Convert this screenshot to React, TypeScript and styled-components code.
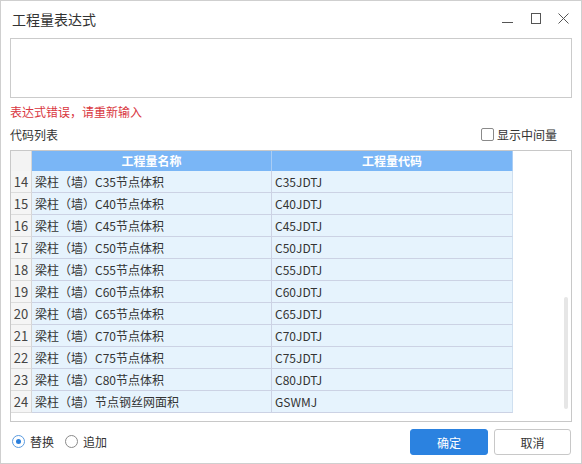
import React from 'react';
import styled, { createGlobalStyle } from 'styled-components';

const GlobalStyle = createGlobalStyle`
  html, body {
    margin: 0;
    padding: 0;
    background: #ffffff;
  }
  body {
    font-family: 'Noto Sans CJK SC', 'Noto Sans', 'Liberation Sans', sans-serif;
    color: #333333;
  }
`;

const rows = [
  { no: 14, name: '梁柱（墙）C35节点体积', code: 'C35JDTJ' },
  { no: 15, name: '梁柱（墙）C40节点体积', code: 'C40JDTJ' },
  { no: 16, name: '梁柱（墙）C45节点体积', code: 'C45JDTJ' },
  { no: 17, name: '梁柱（墙）C50节点体积', code: 'C50JDTJ' },
  { no: 18, name: '梁柱（墙）C55节点体积', code: 'C55JDTJ' },
  { no: 19, name: '梁柱（墙）C60节点体积', code: 'C60JDTJ' },
  { no: 20, name: '梁柱（墙）C65节点体积', code: 'C65JDTJ' },
  { no: 21, name: '梁柱（墙）C70节点体积', code: 'C70JDTJ' },
  { no: 22, name: '梁柱（墙）C75节点体积', code: 'C75JDTJ' },
  { no: 23, name: '梁柱（墙）C80节点体积', code: 'C80JDTJ' },
  { no: 24, name: '梁柱（墙）节点钢丝网面积', code: 'GSWMJ' },
];

const Window = styled.div`
  position: relative;
  box-sizing: border-box;
  width: 582px;
  height: 464px;
  border: 1px solid #cfcfcf;
  background: #ffffff;
  display: flex;
  flex-direction: column;
`;

const TitleBar = styled.div`
  height: 37px;
  display: flex;
  align-items: center;
  justify-content: space-between;
  padding: 0 12px 0 11px;
`;

const Title = styled.div`
  font-size: 14px;
  color: #333;
  margin-top: -1px;
`;

const Controls = styled.div`
  display: flex;
  align-items: center;
  gap: 17px;
`;

const CtrlBtn = styled.div`
  width: 11px;
  height: 11px;
  display: flex;
  align-items: center;
  justify-content: center;
  margin-top: -2px;
`;

const Body = styled.div`
  flex: 1;
  display: flex;
  flex-direction: column;
  padding: 0 9px;
`;

const ExprBox = styled.div`
  height: 58px;
  border: 1px solid #cbcbcb;
`;

const ErrorText = styled.div`
  height: 27px;
  line-height: 27px;
  font-size: 12px;
  color: #d9363e;
`;

const ListHead = styled.div`
  height: 25px;
  display: flex;
  align-items: center;
  justify-content: space-between;
  font-size: 12px;
  padding-bottom: 6px;
  box-sizing: border-box;
`;

const CheckLabel = styled.label`
  display: flex;
  align-items: center;
  gap: 3px;
  font-size: 12px;
  color: #333;
  margin-right: 15px;
`;

const CheckBox = styled.span`
  width: 11px;
  height: 11px;
  border: 1px solid #8a8a8a;
  border-radius: 2px;
  background: #fff;
`;

const TableBox = styled.div`
  position: relative;
  height: 272px;
  border: 1px solid #c8c8c8;
  box-sizing: border-box;
  overflow: hidden;
`;

const Grid = styled.div`
  display: grid;
  grid-template-columns: 21px 240px 241px;
  width: 502px;
`;

const NoHead = styled.div`
  height: 20px;
  background: #f3f3f3;
  border-right: 1px solid #d6d6d6;
`;

const HeadCell = styled.div`
  height: 20px;
  line-height: 20px;
  background: #7ab6f6;
  color: #ffffff;
  font-size: 12px;
  font-weight: bold;
  text-align: center;
  border-right: 1px solid #a9cdf5;
`;

const NoCell = styled.div`
  height: 22px;
  line-height: 21px;
  box-sizing: border-box;
  background: #f5f5f5;
  border-right: 1px solid #d6d6d6;
  border-bottom: 1px solid #dcdcdc;
  font-size: 13px;
  color: #444;
  text-align: center;
`;

const DataCell = styled.div<{ $last?: boolean }>`
  height: 22px;
  line-height: 21px;
  box-sizing: border-box;
  background: #e6f3fd;
  border-bottom: 1px solid #ccd2e4;
  border-right: 1px solid ${(p) => (p.$last ? '#cfe0f0' : '#ccd2e4')};
  font-size: 12px;
  color: #333;
  padding-left: 3px;
  white-space: nowrap;
`;

const Thumb = styled.div`
  position: absolute;
  right: 3px;
  top: 146px;
  width: 4px;
  height: 112px;
  border-radius: 2px;
  background: #e6e6e6;
`;

const Footer = styled.div`
  height: 41px;
  display: flex;
  align-items: center;
  justify-content: space-between;
  padding: 0 1px 0 2px;
`;

const RadioGroup = styled.div`
  display: flex;
  align-items: center;
  gap: 11px;
  margin-top: -2px;
`;

const RadioLabel = styled.label`
  display: flex;
  align-items: center;
  gap: 5px;
  font-size: 12px;
  color: #333;
`;

const RadioDot = styled.span<{ $on?: boolean }>`
  width: 11px;
  height: 11px;
  border-radius: 50%;
  border: 1px solid ${(p) => (p.$on ? '#5a9be0' : '#8a8a8a')};
  background: #fff;
  display: flex;
  align-items: center;
  justify-content: center;
  &::after {
    content: '';
    display: ${(p) => (p.$on ? 'block' : 'none')};
    width: 5px;
    height: 5px;
    border-radius: 50%;
    background: #2a7fdc;
  }
`;

const Buttons = styled.div`
  display: flex;
  gap: 6px;
  margin-top: -1px;
`;

const Button = styled.button<{ $primary?: boolean }>`
  width: ${(p) => (p.$primary ? '78px' : '77px')};
  height: 26px;
  border-radius: 3px;
  font-family: inherit;
  font-size: 12px;
  padding: 0;
  border: 1px solid ${(p) => (p.$primary ? '#2b82e0' : '#c8c8c8')};
  background: ${(p) => (p.$primary ? '#2b82e0' : '#ffffff')};
  color: ${(p) => (p.$primary ? '#ffffff' : '#333333')};
`;

const Grip = styled.div`
  position: absolute;
  right: 2px;
  bottom: 2px;
  width: 7px;
  height: 7px;
`;

export default function App() {
  return (
    <>
      <GlobalStyle />
      <Window>
        <TitleBar>
          <Title>工程量表达式</Title>
          <Controls>
            <CtrlBtn>
              <svg width="11" height="11" viewBox="0 0 11 11">
                <line x1="0" y1="9.5" x2="11" y2="9.5" stroke="#555" strokeWidth="1" />
              </svg>
            </CtrlBtn>
            <CtrlBtn>
              <svg width="11" height="11" viewBox="0 0 11 11">
                <rect x="1.5" y="0.5" width="9" height="10" fill="none" stroke="#555" strokeWidth="1" />
              </svg>
            </CtrlBtn>
            <CtrlBtn>
              <svg width="11" height="11" viewBox="0 0 11 11">
                <path d="M0.5 0.5 L10.5 10.5 M10.5 0.5 L0.5 10.5" stroke="#555" strokeWidth="1" />
              </svg>
            </CtrlBtn>
          </Controls>
        </TitleBar>
        <Body>
          <ExprBox />
          <ErrorText>表达式错误，请重新输入</ErrorText>
          <ListHead>
            <span>代码列表</span>
            <CheckLabel>
              <CheckBox />
              显示中间量
            </CheckLabel>
          </ListHead>
          <TableBox>
            <Grid>
              <NoHead />
              <HeadCell>工程量名称</HeadCell>
              <HeadCell>工程量代码</HeadCell>
              {rows.map((r) => (
                <React.Fragment key={r.no}>
                  <NoCell>{r.no}</NoCell>
                  <DataCell>{r.name}</DataCell>
                  <DataCell $last>{r.code}</DataCell>
                </React.Fragment>
              ))}
            </Grid>
            <Thumb />
          </TableBox>
          <Footer>
            <RadioGroup>
              <RadioLabel>
                <RadioDot $on />
                替换
              </RadioLabel>
              <RadioLabel>
                <RadioDot />
                追加
              </RadioLabel>
            </RadioGroup>
            <Buttons>
              <Button $primary>确定</Button>
              <Button>取消</Button>
            </Buttons>
          </Footer>
        </Body>
        <Grip>
          <svg width="7" height="7" viewBox="0 0 7 7">
            <rect x="5" y="1" width="1.5" height="1.5" fill="#888" />
            <rect x="3" y="3" width="1.5" height="1.5" fill="#888" />
            <rect x="5" y="3" width="1.5" height="1.5" fill="#888" />
            <rect x="1" y="5" width="1.5" height="1.5" fill="#888" />
            <rect x="3" y="5" width="1.5" height="1.5" fill="#888" />
            <rect x="5" y="5" width="1.5" height="1.5" fill="#888" />
          </svg>
        </Grip>
      </Window>
    </>
  );
}
